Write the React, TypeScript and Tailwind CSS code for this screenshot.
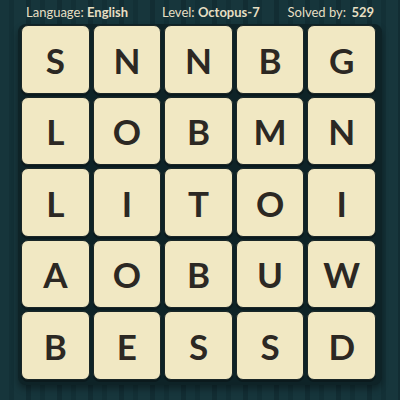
import React from 'react';

const rows = [
    ['S', 'N', 'N', 'B', 'G'],
    ['L', 'O', 'B', 'M', 'N'],
    ['L', 'I', 'T', 'O', 'I'],
    ['A', 'O', 'B', 'U', 'W'],
    ['B', 'E', 'S', 'S', 'D'],
];

const Tile: React.FC<{ letter: string }> = ({ letter }) => (
    <div className="h-[68.5px] rounded-[7px] bg-[#f1e8c3] border border-[#1a2626] shadow-[0_2px_0_#0b1a1d] flex items-center justify-center">
        <span className="text-[35px] leading-none font-bold text-[#2c2823] pt-[2px]">{letter}</span>
    </div>
);

export default function App() {
    return (
        <div
            className="w-[400px] h-[400px] overflow-hidden bg-[repeating-linear-gradient(90deg,#16353b_0px,#16353b_9px,#133036_9px,#133036_14px,#17363c_14px,#17363c_26px,#122d33_26px,#122d33_31px)] font-['Lato','Open_Sans',sans-serif] flex flex-col"
        >
            <div className="h-[24px] flex items-center justify-between pl-[26px] pr-[26px] text-[13px] text-[#e6dfc3] pt-[1px]">
                <span>Language: <b className="font-bold">English</b></span>
                <span className="ml-[6px]">Level: <b className="font-bold">Octopus-7</b></span>
                <span>Solved by: <b className="font-bold ml-[2px]">529</b></span>
            </div>
            <div className="ml-[18px] w-[364px] rounded-[8px] bg-[#0e2327] shadow-[0_4px_6px_rgba(0,0,0,0.35)] pl-[3px] pr-[5px] pt-[1px] pb-[5px]">
                <div className="grid grid-cols-5 gap-[3px] w-[355px]">
                    {rows.flat().map((l, i) => (
                        <Tile key={i} letter={l} />
                    ))}
                </div>
            </div>
        </div>
    );
}
